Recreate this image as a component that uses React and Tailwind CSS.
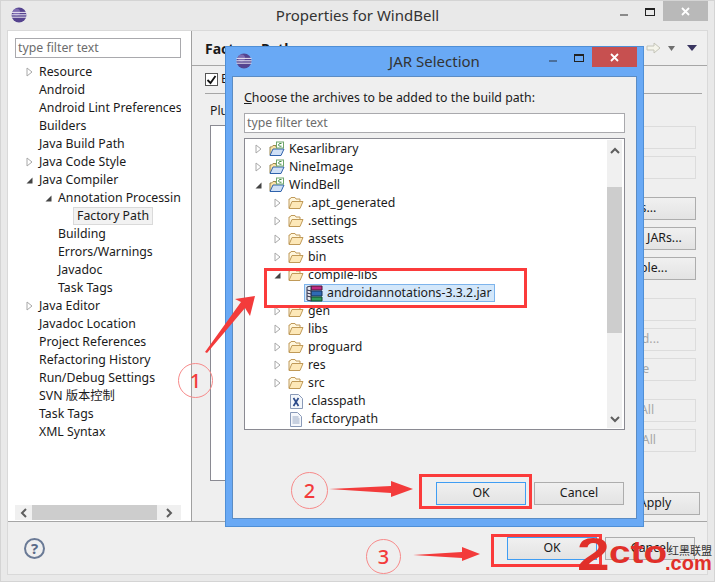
const font = { fontFamily: '"Noto Sans", "Noto Sans CJK SC", sans-serif' };
const logoFont = { fontFamily: '"Liberation Sans", sans-serif' };

function EclipseLogo() {
  return (
    <svg width="16" height="16" viewBox="0 0 16 16" className="shrink-0">
      <circle cx="8" cy="8" r="7.5" fill="#55438f" />
      <circle cx="5.5" cy="5" r="3.5" fill="#9a88c8" opacity="0.6" />
      <path d="M0.5 5.4h15M0.3 7.8h15.4M0.5 10.200h15" stroke="#ece8f4" strokeWidth="1" />
    </svg>
  );
}

function Collapsed() {
  return (
    <svg width="7" height="10" viewBox="0 0 7 10" className="shrink-0">
      <path d="M1 1l5 4-5 4z" fill="#fff" stroke="#a8a8a8" />
    </svg>
  );
}

function Expanded() {
  return (
    <svg width="7" height="7" viewBox="0 0 7 7" className="shrink-0">
      <path d="M6.5 0.5v6h-6z" fill="#444" />
    </svg>
  );
}

function FolderIcon() {
  return (
    <svg width="16" height="14" viewBox="0 0 16 14" className="shrink-0">
      <path d="M1 12V3h1l1-1.500h4L8 3h4v2" fill="#fff6dc" stroke="#c09a5a" />
      <path d="M1 12.500l3-7h11l-3 7z" fill="#fde8b8" stroke="#c09a58" strokeLinejoin="round" />
    </svg>
  );
}

function ProjectIcon() {
  return (
    <svg width="16" height="16" viewBox="0 0 16 16" className="shrink-0">
      <path d="M1 14V6h1.500L4 4.500h3V6h4" fill="#fbe3a6" stroke="#9a8850" />
      <path d="M1 14.500l3-6.500h11l-3 6.500z" fill="#cfe0f6" stroke="#2f62ac" strokeLinejoin="round" />
      <rect x="7.5" y="1" width="7" height="6" fill="#fff" stroke="#6fa66c" />
      <path d="M12.500 2.500h-2L9.500 4l1 1.200h2" fill="none" stroke="#3c8c3c" />
    </svg>
  );
}

function JarIcon() {
  return (
    <svg width="17" height="17" viewBox="0 0 17 17" className="shrink-0">
      <path d="M5 1h11v4H5z" fill="#c02a80" stroke="#4a1436" />
      <path d="M5 6h11v5H5z" fill="#2f6ab4" stroke="#15325a" />
      <path d="M5 12h11v4H5z" fill="#2f9a5a" stroke="#0f4a2a" />
      <path d="M1 2l4-1v15l-4-1z" fill="#e8e8ee" stroke="#30304a" />
      <path d="M1 5l4 1M1 8l4 1M1 11l4 1" stroke="#30304a" />
    </svg>
  );
}

function XmlIcon() {
  return (
    <svg width="13" height="15" viewBox="0 0 13 15" className="shrink-0">
      <path d="M0.500 0.500h8l4 4v10h-12z" fill="#f4f7fb" stroke="#8a9ab8" />
      <path d="M3.500 4l5 8M8.500 4l-5 8" stroke="#2c4a8a" strokeWidth="1.700" />
    </svg>
  );
}

function FileIcon() {
  return (
    <svg width="12" height="15" viewBox="0 0 12 15" className="shrink-0">
      <path d="M0.500 0.500h7l4 4v10h-11z" fill="#f6f8fc" stroke="#8a9ab8" />
      <path d="M2.500 5h6M2.500 7h7M2.500 9h7M2.500 11h7" stroke="#98a8c4" />
    </svg>
  );
}

function Chevron({ dir }) {
  const d = {
    up: "M1 6l4-4 4 4",
    down: "M1 2l4 4 4-4",
    left: "M6 1L2 5l4 4",
    right: "M2 1l4 4-4 4",
  }[dir];
  const vertical = dir === "up" || dir === "down";
  return (
    <svg width={vertical ? 10 : 8} height={vertical ? 8 : 10} viewBox={vertical ? "0 0 10 8" : "0 0 8 10"}>
      <path d={d} fill="none" stroke="#5e5e5e" strokeWidth="2" />
    </svg>
  );
}

function CloseX() {
  return (
    <svg width="9" height="9" viewBox="0 0 9 9">
      <path d="M1 1l7 7M8 1L1 8" stroke="#fff" strokeWidth="1.800" />
    </svg>
  );
}

function WinButtons({ closeClass, minClass }) {
  return (
    <div className="flex items-start">
      <div className={`mt-[13px] mr-[17px] h-[2px] w-[8px] ${minClass}`} />
      <div className="mt-[7px] mr-[8px] h-[8px] w-[10px] border border-t-2 border-[#222]" />
      <div className={`flex h-[20px] w-[45px] items-center justify-center ${closeClass}`}>
        <CloseX />
      </div>
    </div>
  );
}

const navRows = [
  [0, "c", "Resource"],
  [0, "", "Android"],
  [0, "", "Android Lint Preferences"],
  [0, "", "Builders"],
  [0, "", "Java Build Path"],
  [0, "c", "Java Code Style"],
  [0, "e", "Java Compiler"],
  [1, "e", "Annotation Processing"],
  [2, "s", "Factory Path"],
  [1, "", "Building"],
  [1, "", "Errors/Warnings"],
  [1, "", "Javadoc"],
  [1, "", "Task Tags"],
  [0, "c", "Java Editor"],
  [0, "", "Javadoc Location"],
  [0, "", "Project References"],
  [0, "", "Refactoring History"],
  [0, "", "Run/Debug Settings"],
  [0, "", "SVN 版本控制"],
  [0, "", "Task Tags"],
  [0, "", "XML Syntax"],
];

function NavRow({ depth, mark, label }) {
  const indent = ["pl-[18px]", "pl-[37px]", "pl-[65px]"][depth];
  return (
    <div className={`flex h-[18px] items-center whitespace-nowrap ${indent}`}>
      {mark === "s" ? (
        <span className="flex h-[18px] items-center border border-[#dadada] bg-[#f2f2f2] px-[3px]">{label}</span>
      ) : (
        <>
          <span className="flex w-[13px] shrink-0 items-center">
            {mark === "c" && <Collapsed />}
            {mark === "e" && <Expanded />}
          </span>
          <span>{label}</span>
        </>
      )}
    </div>
  );
}

const fileRows = [
  [0, "c", "p", "Kesarlibrary"],
  [0, "c", "p", "NineImage"],
  [0, "e", "p", "WindBell"],
  [1, "c", "f", ".apt_generated"],
  [1, "c", "f", ".settings"],
  [1, "c", "f", "assets"],
  [1, "c", "f", "bin"],
  [1, "e", "f", "compile-libs"],
  [2, "", "j", "androidannotations-3.3.2.jar"],
  [1, "c", "f", "gen"],
  [1, "c", "f", "libs"],
  [1, "c", "f", "proguard"],
  [1, "c", "f", "res"],
  [1, "c", "f", "src"],
  [1, "", "x", ".classpath"],
  [1, "", "d", ".factorypath"],
];

function FileRow({ depth, mark, icon, label }) {
  if (icon === "j") {
    return (
      <div className="flex h-[18px] items-center pl-[59px] whitespace-nowrap">
        <span className="flex h-[18px] w-[191px] items-center gap-[4px] border border-[#7db4ec] bg-[#d3e7fa] pl-[1px]">
          <JarIcon />
          <span>{label}</span>
        </span>
      </div>
    );
  }
  const indent = depth === 0 ? "pl-[10px]" : "pl-[29px]";
  return (
    <div className={`flex h-[18px] items-center whitespace-nowrap ${indent}`}>
      <span className="flex w-[14px] shrink-0 items-center">
        {mark === "c" && <Collapsed />}
        {mark === "e" && <Expanded />}
      </span>
      <span className="flex w-[20px] shrink-0 items-center">
        {icon === "p" && <ProjectIcon />}
        {icon === "f" && <FolderIcon />}
        {icon === "x" && <span className="pl-[2px]"><XmlIcon /></span>}
        {icon === "d" && <span className="pl-[2px]"><FileIcon /></span>}
      </span>
      <span>{label}</span>
    </div>
  );
}

function SideButton({ label, disabled, className = "" }) {
  return (
    <div
      className={`flex h-[23px] w-[140px] items-center justify-center border whitespace-nowrap ${
        disabled ? "border-[#dcdcdc] bg-[#efefef] text-[#a8a8a8]" : "border-[#adadad] bg-gradient-to-b from-[#f0f0f0] to-[#e3e3e3]"
      } ${className}`}
    >
      {label}
    </div>
  );
}

function PushButton({ label, focused }) {
  return (
    <div
      className={`flex h-[23px] w-[90px] items-center justify-center border bg-gradient-to-b from-[#f0f0f0] to-[#e3e3e3] ${
        focused ? "border-[#3f9df3]" : "border-[#adadad]"
      }`}
    >
      {label}
    </div>
  );
}

function Dialog() {
  return (
    <div className="absolute top-[46px] left-[225px] flex h-[481px] w-[419px] flex-col border border-[#4f8fd6] bg-[#69a9f5]">
      <div className="flex h-[29px] shrink-0 items-start justify-between">
        <div className="pt-[6px] pl-[10px]">
          <EclipseLogo />
        </div>
        <span className="absolute top-[3px] right-0 left-0 text-center text-[15px] text-[#333]">JAR Selection</span>
        <div className="relative mr-[6px] flex">
          <WinButtons closeClass="bg-[#c75050]" minClass="bg-[#4b6f9b]" />
        </div>
      </div>
      <div className="mx-[6px] mb-[7px] flex flex-1 flex-col border border-[#5b8cc4] bg-[#efefef] px-[11px] pt-[12px]">
        <div className="h-[18px] leading-[18px]">
          <span className="underline">C</span>hoose the archives to be added to the build path:
        </div>
        <div className="mt-[6px] flex h-[20px] items-center border border-[#a9a9ad] bg-white pl-[2px] text-[#6d6d6d]">
          type filter text
        </div>
        <div className="mt-[5px] flex h-[292px] border border-[#8a8a92] bg-white">
          <div className="min-w-0 flex-1 overflow-hidden py-[1px]">
            {fileRows.map(([depth, mark, icon, label]) => (
              <FileRow key={label} depth={depth} mark={mark} icon={icon} label={label} />
            ))}
          </div>
          <div className="my-[1px] mr-[2px] flex w-[15px] shrink-0 flex-col items-center bg-[#f0f0f0]">
            <div className="flex h-[47px] w-full justify-center pt-[7px]">
              <Chevron dir="up" />
            </div>
            <div className="h-[146px] w-full bg-[#cdcdcd]" />
            <div className="flex flex-1 items-end pb-[5px]">
              <Chevron dir="down" />
            </div>
          </div>
        </div>
        <div className="mt-[52px] flex justify-end gap-[8px] pr-[1px]">
          <PushButton label="OK" focused />
          <PushButton label="Cancel" />
        </div>
      </div>
    </div>
  );
}

function Annotations() {
  return (
    <>
      <svg width="715" height="582" viewBox="0 0 715 582" className="absolute top-0 left-0">
        <path d="M205 352L241 302L235 299L255 296L250 316L245 308L207 353Z" fill="#f33b3b" />
        <path d="M329 489L391 486V481L413 489L391 497V493Z" fill="#f33b3b" />
        <path d="M413 555L462 552L462 547L480 554L462 561L462 558Z" fill="#f33b3b" />
      </svg>
      <div className="absolute top-[268px] left-[264px] h-[40px] w-[263px] border-[3px] border-[#fb3b3b]" />
      <div className="absolute top-[474px] left-[419px] h-[35px] w-[113px] border-[3px] border-[#fb3b3b]" />
      <div className="absolute top-[534px] left-[491px] h-[33px] w-[111px] border-[3px] border-[#fb3b3b]" />
      <div className="absolute top-[363px] left-[178px] flex h-[35px] w-[35px] items-center justify-center rounded-full border border-[#f78a8a] text-[20px] font-medium text-[#f33b3b]">1</div>
      <div className="absolute top-[472px] left-[291px] flex h-[37px] w-[37px] items-center justify-center rounded-full border border-[#f78a8a] text-[20px] font-medium text-[#f33b3b]">2</div>
      <div className="absolute top-[539px] left-[366px] flex h-[35px] w-[35px] items-center justify-center rounded-full border border-[#f78a8a] text-[20px] font-medium text-[#f33b3b]">3</div>
      <div className="absolute top-[545px] left-[668px] text-[11px] leading-[12px] text-[#333]">红黑联盟</div>
      <div className="absolute top-[524px] left-[577px] origin-left scale-x-[1.25] text-[47px] leading-[60px] font-bold text-[#e1302a]" style={logoFont}>
        2
      </div>
      <div className="absolute top-[533px] left-[609px] origin-left scale-x-[1.25] text-[31px] leading-[40px] font-bold text-[#e1302a]" style={logoFont}>
        cto
      </div>
      <div className="absolute top-[550px] left-[665px] text-[20px] leading-[26px] font-bold text-[#e1302a]" style={logoFont}>
        .com
      </div>
    </>
  );
}

export default function App() {
  return (
    <div
      className="relative flex h-[582px] w-[715px] flex-col overflow-hidden bg-[#e9e9e9] text-[12.3px] text-[#1a1a1a] shadow-[inset_0_0_0_1px_#d4d4d4]"
      style={font}
    >
      <div className="relative flex h-[30px] shrink-0 justify-between">
        <div className="pt-[7px] pl-[11px]">
          <EclipseLogo />
        </div>
        <span className="absolute top-[4px] right-0 left-0 text-center text-[15px] text-[#333]">Properties for WindBell</span>
        <div className="relative mt-[1px] mr-[7px] flex">
          <WinButtons closeClass="bg-[#b9b9b9]" minClass="bg-[#8a8a8a]" />
        </div>
      </div>

      <div className="mx-[7px] mb-[7px] flex flex-1 flex-col border border-[#d9d9d9] bg-[#efefef]">
        <div className="flex h-[491px] border-b border-[#a6a6a6]">
          <div className="flex w-[184px] shrink-0 flex-col border-r border-[#a0a0a0] bg-white">
            <div className="mx-[7px] mt-[7px] flex h-[20px] w-[166px] shrink-0 items-center border border-[#a9a9ad] pl-[2px] text-[#6d6d6d]">
              type filter text
            </div>
            <div className="mt-[5px] w-[173px] flex-1 overflow-hidden">
              {navRows.map(([depth, mark, label], i) => (
                <NavRow key={i} depth={depth} mark={mark} label={label} />
              ))}
            </div>
            <div className="mr-[10px] mb-[1px] ml-[7px] flex h-[15px] items-center bg-[#f0f0f0]">
              <div className="flex w-[17px] justify-center"><Chevron dir="left" /></div>
              <div className="h-full w-[125px] bg-[#cdcdcd]" />
              <div className="flex flex-1 justify-center"><Chevron dir="right" /></div>
            </div>
          </div>

          <div className="flex min-w-0 flex-1 flex-col">
            <div className="flex h-[35px] items-center justify-between border-b border-[#a6a6a6] pr-[10px] pl-[13px]">
              <span className="text-[14px] font-bold">Factory Path</span>
              <div className="flex items-center gap-[6px]">
                <svg width="15" height="12" viewBox="0 0 15 12">
                  <path d="M1 4h7V1l6 5-6 5V8H1z" fill="#f4f4ea" stroke="#c4c4b8" />
                </svg>
                <svg width="9" height="5" viewBox="0 0 9 5"><path d="M1 0h7L4.500 5z" fill="#6e6e6e" /></svg>
                <svg width="10" height="6" viewBox="0 0 10 6" className="ml-[5px]"><path d="M0 0h10L5 6z" fill="#3a3560" /></svg>
              </div>
            </div>
            <div className="mr-[5px] ml-[13px] flex h-[28px] items-center gap-[3px] border-b border-[#a6a6a6]">
              <span className="flex h-[13px] w-[13px] items-center justify-center border border-[#555] bg-white">
                <svg width="11" height="10" viewBox="0 0 11 10"><path d="M1.500 5l3 3 5-7" fill="none" stroke="#111" strokeWidth="1.800" /></svg>
              </span>
              <span>Enable project specific settings</span>
            </div>
            <div className="mt-[8px] ml-[18px] h-[18px] leading-[18px]">Plugins and JARs</div>
            <div className="mt-[5px] flex pl-[18px]">
              <div className="h-[356px] w-[336px] border border-[#8a8a92] bg-white" />
              <div className="mt-[1px] ml-[10px] flex flex-col">
                <SideButton label="Up" disabled />
                <SideButton label="Down" disabled className="mt-[7px]" />
                <SideButton label="Add JARs..." className="mt-[18px]" />
                <SideButton label="Add External JARs..." className="mt-[7px]" />
                <SideButton label="Add Variable..." className="mt-[7px]" />
                <SideButton label="Edit..." disabled className="mt-[18px]" />
                <SideButton label="Advanced..." disabled className="mt-[7px]" />
                <SideButton label="Remove" disabled className="mt-[7px]" />
                <SideButton label="Enable All" disabled className="mt-[18px]" />
                <SideButton label="Disable All" disabled className="mt-[7px]" />
              </div>
            </div>
            <div className="mt-[11px] flex justify-end pr-[7px]">
              <PushButton label="Apply" />
            </div>
          </div>
        </div>

        <div className="flex flex-1 items-center justify-between pr-[12px] pl-[16px]">
          <div className="flex h-[21px] w-[21px] items-center justify-center rounded-full border-2 border-[#6a7a96] text-[15px] font-bold text-[#5a6a88]">?</div>
          <div className="flex gap-[8px]">
            <PushButton label="OK" focused />
            <PushButton label="Cancel" />
          </div>
        </div>
      </div>

      <Dialog />
      <Annotations />
    </div>
  );
}
